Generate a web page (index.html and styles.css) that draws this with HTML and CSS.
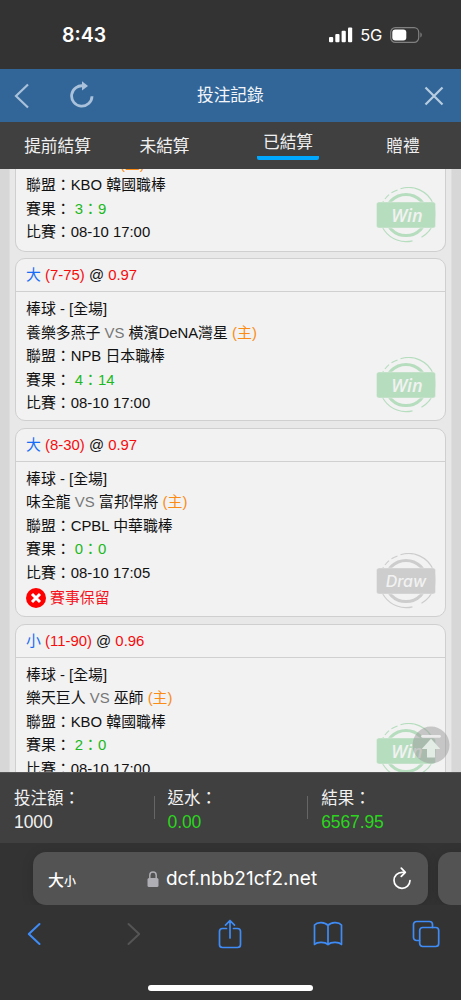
FILE: index.html
```
<!DOCTYPE html>
<html lang="zh-Hant">
<head>
<meta charset="utf-8">
<title>投注記錄</title>
<link rel="stylesheet" href="styles.css">
</head>
<body>
<svg class="defs" width="0" height="0">
  <symbol id="stamp" viewBox="0 0 60 56">
    <circle cx="30" cy="28" r="20.6" fill="none" stroke="currentColor" stroke-width="3"/>
    <path d="M24.5 1.8A26.5 26.5 0 0 1 45.5 50.2M36.5 53.8A26.5 26.5 0 0 1 7.5 14.1M9 12A26.5 26.5 0 0 1 13 7.600M15.5 5.8A26.5 26.5 0 0 1 21.5 3" fill="none" stroke="currentColor" stroke-width="1.2"/>
    <rect x=".5" y="15" width="59" height="26" rx="2.5" fill="currentColor" stroke="#f2f2f2" stroke-width=".4"/>
  </symbol>
</svg>
<header class="status">
  <span class="time">8:43</span>
  <div class="signals">
    <svg width="24" height="16" viewBox="0 0 24 16" fill="#fff"><rect x="0" y="10" width="4.2" height="5.3" rx="1"/><rect x="6.3" y="7" width="4.2" height="8.3" rx="1"/><rect x="12.6" y="3.7" width="4.2" height="11.6" rx="1"/><rect x="19" y=".5" width="4.2" height="14.8" rx="1"/></svg>
    <span class="net">5G</span>
    <svg width="33" height="16" viewBox="0 0 33 16"><rect x=".7" y=".7" width="28" height="14.6" rx="4.6" fill="none" stroke="#808080" stroke-width="1.2"/><rect x="2.3" y="2.4" width="14" height="11.2" rx="3" fill="#fff"/><path d="M30.4 5.6c1.8.6 1.8 4.2 0 4.8z" fill="#808080"/></svg>
  </div>
</header>
<div class="titlebar">
  <svg class="back" width="16" height="26" viewBox="0 0 16 26"><path d="M14 1.5 2 13l12 11.5" fill="none" stroke="#a9c1da" stroke-width="2.2"/></svg>
  <svg class="reload" width="24" height="28" viewBox="0 0 24 28"><path d="M14 5A10.2 10.2 0 1 0 22 15.2" fill="none" stroke="#a9c1da" stroke-width="2.8"/><path d="M12 .3 18 5 12 9.500z" fill="#a9c1da"/></svg>
  <h1>投注記錄</h1>
  <svg class="close" width="20" height="20" viewBox="0 0 20 20"><path d="m1.500 1.500 17 17m0-17-17 17" stroke="#b9cde0" stroke-width="2.2"/></svg>
</div>
<nav class="tabs">
  <span>提前結算</span><span>未結算</span><span><b>已結算</b></span><span>贈禮</span>
</nav>
<main class="records">
  <div class="list">
    <article class="card first">
      <div class="body">
        <p class="cut"><i class="host">(主)</i></p>
        <p>聯盟：KBO 韓國職棒</p>
        <p>賽果： <i class="score">3：9</i></p>
        <p>比賽：08-10 17:00</p>
      </div>
      <div class="stamp win"><svg><use href="#stamp"/></svg><span>Win</span></div>
    </article>
    <article class="card">
      <h2><i class="pick">大</i> <i class="odds">(7-75)</i> @ <i class="odds">0.97</i></h2>
      <div class="body">
        <p>棒球 - [全場]</p>
        <p>養樂多燕子 <i class="vs">VS</i> 橫濱DeNA灣星 <i class="host">(主)</i></p>
        <p>聯盟：NPB 日本職棒</p>
        <p>賽果： <i class="score">4：14</i></p>
        <p>比賽：08-10 17:00</p>
      </div>
      <div class="stamp win"><svg><use href="#stamp"/></svg><span>Win</span></div>
    </article>
    <article class="card">
      <h2><i class="pick">大</i> <i class="odds">(8-30)</i> @ <i class="odds">0.97</i></h2>
      <div class="body">
        <p>棒球 - [全場]</p>
        <p>味全龍 <i class="vs">VS</i> 富邦悍將 <i class="host">(主)</i></p>
        <p>聯盟：CPBL 中華職棒</p>
        <p>賽果： <i class="score">0：0</i></p>
        <p>比賽：08-10 17:05</p>
        <p class="void"><svg width="20" height="20" viewBox="0 0 20 20"><circle cx="10" cy="10" r="10" fill="#f00"/><path d="m6 6 8 8m0-8-8 8" stroke="#fff" stroke-width="3"/></svg>賽事保留</p>
      </div>
      <div class="stamp draw"><svg><use href="#stamp"/></svg><span>Draw</span></div>
    </article>
    <article class="card">
      <h2><i class="pick">小</i> <i class="odds">(11-90)</i> @ <i class="odds">0.96</i></h2>
      <div class="body">
        <p>棒球 - [全場]</p>
        <p>樂天巨人 <i class="vs">VS</i> 巫師 <i class="host">(主)</i></p>
        <p>聯盟：KBO 韓國職棒</p>
        <p>賽果： <i class="score">2：0</i></p>
        <p>比賽：08-10 17:00</p>
      </div>
      <div class="stamp win"><svg><use href="#stamp"/></svg><span>Win</span></div>
    </article>
  </div>
  <svg class="totop" width="38" height="38" viewBox="0 0 38 38"><circle cx="19" cy="19" r="18.500" fill="#999" fill-opacity=".5"/><path d="M10.500 10.300h17" stroke="#ececec" stroke-width="2.800" stroke-linecap="round"/><path d="m19 12.800 9.300 10.200h-5.300v8.500h-8V23H9.700z" fill="#e2ece4"/></svg>
</main>
<section class="totals">
  <div><span>投注額：</span><span>1000</span></div>
  <div><span>返水：</span><span class="plus">0.00</span></div>
  <div><span>結果：</span><span class="plus">6567.95</span></div>
</section>
<footer class="browser">
  <div class="address-row">
    <div class="address">
      <span class="size">大<small>小</small></span>
      <span class="url"><svg width="12" height="16" viewBox="0 0 12 16"><rect x=".5" y="7" width="11" height="9" rx="1.500" fill="#aeaeb4"/><path d="M2.800 8V4.200a3.200 3.200 0 0 1 6.400 0V8" fill="none" stroke="#aeaeb4" stroke-width="1.500"/></svg><span>dcf.nbb21cf2.net</span></span>
      <svg class="refresh" width="20" height="23" viewBox="0 0 20 23"><path d="M12.500 5.300H10a8 8 0 1 0 8 8.200" fill="none" stroke="#fff" stroke-width="1.700" stroke-linecap="round"/><path d="m9.300 1.200 4 4.100-4 4.100" fill="none" stroke="#fff" stroke-width="1.700" stroke-linecap="round" stroke-linejoin="round"/></svg>
    </div>
    <div class="next-tab"></div>
  </div>
  <div class="tools">
    <svg width="30" height="24" viewBox="0 0 30 24"><path d="M20.500 2 9.800 12l10.700 10" stroke-width="2"/></svg>
    <svg class="off" width="30" height="24" viewBox="0 0 30 24"><path d="m11.500 2 10.700 10-10.700 10" stroke-width="2"/></svg>
    <svg width="30" height="30" viewBox="-3 0 30 30"><path d="M8.500 9.500h-4a3 3 0 0 0-3 3v13a3 3 0 0 0 3 3h15a3 3 0 0 0 3-3v-13a3 3 0 0 0-3-3h-4M12 19V1.800M7.500 6.200 12 1.500l4.500 4.700"/></svg>
    <svg width="30" height="26" viewBox="0 0 30 26"><path d="M15 4.500C12 1 4.500 .5 1.500 4v19.500c3-3 10.500-2.500 13.500 0 3-2.500 10.500-3 13.500 0V4C25.500 .5 18 1 15 4.500zv19"/></svg>
    <svg width="30" height="28" viewBox="-1 0 30 28"><rect x="7.700" y="7.500" width="19" height="19" rx="3"/><path d="M7.500 20.500h-3a3 3 0 0 1-3-3v-13a3 3 0 0 1 3-3h13a3 3 0 0 1 3 3v3"/></svg>
  </div>
  <div class="home"></div>
</footer>
</body>
</html>
```
FILE: styles.css
```
* { box-sizing: border-box; }
body {
  margin: 0;
  width: 461px;
  height: 1000px;
  overflow: hidden;
  display: flex;
  flex-direction: column;
  background: #333;
  font-family: "Liberation Sans", "Noto Sans CJK TC", sans-serif;
}
h1, h2, p { margin: 0; font-weight: 400; }
i { font-style: normal; }
svg { display: block; flex: none; }
.defs { display: none; }

.status {
  height: 69px;
  flex: none;
  display: flex;
  justify-content: space-between;
  padding: 23px 38px 0 62px;
  color: #fff;
  font-family: Inter, sans-serif;
}
.time { font-size: 19.5px; font-weight: 600; line-height: 24px; }
.signals { display: flex; align-items: center; height: 23px; }
.net { margin: 0 8px 0 7px; font-size: 16.5px; font-weight: 400; letter-spacing: -.3px; }

.titlebar {
  height: 53px;
  flex: none;
  display: flex;
  align-items: center;
  padding: 0 17px 0 14px;
  background: #326699;
  color: #f2f6fa;
}
.titlebar .reload { margin: 0 103px 2px 40px; }
.titlebar h1 { font-size: 16.7px; line-height: 24px; }
.titlebar .close { margin-left: auto; }

.tabs {
  height: 47px;
  flex: none;
  display: grid;
  grid-template-columns: 115px 99px 149px 80px;
  background: #404040;
  color: #f0f0f0;
  font-size: 16.7px;
  line-height: 49px;
  text-align: center;
}
.tabs b {
  display: block;
  width: 62px;
  height: 38px;
  margin-left: 43px;
  line-height: 41px;
  font-weight: 400;
  border-bottom: 4px solid #00a8ff;
  border-radius: 0 0 2px 2px;
}

.records {
  position: relative;
  height: 603px;
  flex: none;
  overflow: hidden;
  padding: 0 6px 0 9px;
  background: #d7d7d7;
}
.list {
  display: flex;
  flex-direction: column;
  gap: 6.6px;
  width: 443px;
  padding: 0 5px;
  background: #e8e8e8;
  border-right: 1px solid #dedede;
  border-left: 1px solid #dedede;
}
.card {
  position: relative;
  border: 1px solid #cfcfcf;
  border-radius: 10px;
  background: #f2f2f2;
  color: #111;
  font-size: 14.9px;
}
.card h2 {
  height: 32.7px;
  padding-left: 10px;
  border-bottom: 1px solid #d0d0d0;
  font-size: 14.9px;
  line-height: 32px;
}
.card .body { padding: 6.3px 10px 4.8px; }
.card p { height: 23.5px; line-height: 23.5px; white-space: nowrap; }
.card.first { margin-top: -18.5px; height: 101px; border-top: 0; border-radius: 0 0 10px 10px; }
.card.first .body { padding-top: 0; }
.card .cut { padding-left: 94px; line-height: 26px; }
.pick { color: #176df5; }
.odds { color: #f60c0c; }
.vs { color: #777; }
.host { color: #fa8c16; }
.score { color: #20b820; }
.card .void { display: flex; align-items: center; gap: 4px; height: 26px; color: #f5141e; }

.stamp {
  position: absolute;
  right: 9px;
  bottom: 7.5px;
  width: 60px;
  height: 56px;
  line-height: 56px;
  text-align: center;
}
.stamp svg { position: absolute; inset: 0; width: 60px; height: 56px; }
.stamp span {
  position: relative;
  left: 1px;
  color: #f2f2f2;
  font: italic 600 18px/56px "Open Sans", sans-serif;
}
.stamp.win { color: #b7ddbf; }
.stamp.draw { color: #cdcdcd; }
.stamp.draw span { left: 0; font: italic 500 16px/56px Inter, sans-serif; }
.totop { position: absolute; left: 412px; top: 557px; }

.totals {
  height: 71px;
  flex: none;
  display: flex;
  background: #404040;
  color: #f2f2f2;
  border-top: 1px solid #555;
  font-size: 16.5px;
}
.totals div {
  position: relative;
  width: 153.6px;
  padding: 13px 0 0 14px;
  display: flex;
  flex-direction: column;
}
.totals div + div::before {
  content: "";
  position: absolute;
  left: 0;
  top: 23px;
  width: 1px;
  height: 23px;
  background: #666;
}
.totals span { height: 24px; line-height: 24px; }
.totals .plus { color: #2bd51d; }
.totals span + span { font-size: 17.5px; letter-spacing: -.1px; }

.browser { flex: 1; display: flex; flex-direction: column; background: #333; }
.address-row {
  display: flex;
  gap: 10px;
  padding: 9px 0 0 33px;
  overflow: hidden;
}
.address, .next-tab {
  height: 53px;
  flex: none;
  border-radius: 13px;
  background: #535353;
  box-shadow: 0 2px 12px rgba(0, 0, 0, .15);
}
.address {
  width: 395px;
  display: flex;
  align-items: center;
  justify-content: space-between;
  padding: 0 16px 0 15px;
  color: #fff;
}
.next-tab { width: 60px; }
.size { font-size: 16px; font-weight: 500; }
.size small { font-size: 12px; }
.url { display: flex; align-items: center; gap: 7px; margin-right: 4px; font: 19px Inter, sans-serif; }
.tools {
  display: flex;
  align-items: center;
  justify-content: space-between;
  height: 30px;
  margin-top: 14px;
  padding: 0 20px 0 19px;
}
.tools svg { fill: none; stroke: #3f8cf7; stroke-width: 1.7; stroke-linejoin: round; stroke-linecap: round; }
.tools .off { stroke: #555; }
.home { width: 165px; height: 6px; margin: 36px auto 0; border-radius: 3px; background: #fff; }
```
